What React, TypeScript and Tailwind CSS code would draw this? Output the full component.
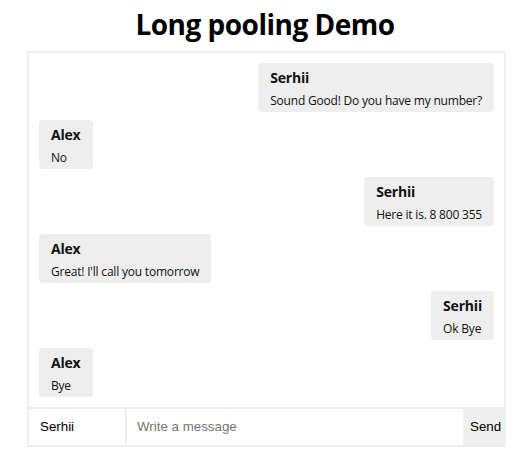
import React, { useState } from "react";

type Message = { id: number; author: string; text: string };

const ME = "Serhii";

const MESSAGES: Message[] = [
	{ id: 1, author: "Serhii", text: "Sound Good! Do you have my number?" },
	{ id: 2, author: "Alex", text: "No" },
	{ id: 3, author: "Serhii", text: "Here it is. 8 800 355" },
	{ id: 4, author: "Alex", text: "Great! I'll call you tomorrow" },
	{ id: 5, author: "Serhii", text: "Ok Bye" },
	{ id: 6, author: "Alex", text: "Bye" }
];

function Bubble({ msg }: { msg: Message }) {
	const mine = msg.author === ME;
	return (
		<div className={`flex ${mine ? "justify-end" : "justify-start"}`}>
			<div className="h-[49px] rounded-[4px] bg-[#eeeeee] px-3 pt-[6px]">
				<div className="text-[14px] font-bold leading-[18px] tracking-[-0.2px] text-[#111]">{msg.author}</div>
				<div className="mt-[5px] text-[12px] leading-[17px] tracking-[-0.2px] text-[#111]">{msg.text}</div>
			</div>
		</div>
	);
}

export default function App() {
	const [name, setName] = useState(ME);
	const [text, setText] = useState("");

	return (
		<div className="min-h-[462px] bg-white pt-[4px] font-['Open_Sans',sans-serif]">
			<h1 className="text-center text-[28px] font-bold leading-[40px] tracking-[-0.5px] text-black">Long pooling Demo</h1>

			<div className="ml-[27px] mt-[7px] w-[479px] border-2 border-[#eeeeee]">
				{/* messages */}
				<div className="flex flex-col gap-[8px] p-[10px]">
					{MESSAGES.map((m) => (
						<Bubble key={m.id} msg={m} />
					))}
				</div>

				{/* footer */}
				<form className="flex h-[38px] border-t-2 border-[#eeeeee] font-['Liberation_Sans',Arial,sans-serif] text-[13.33px]" onSubmit={(e) => e.preventDefault()}>
					<input
						value={name}
						onChange={(e) => setName(e.target.value)}
						className="w-[98px] border-r-2 border-[#eeeeee] bg-white pl-[11px] text-black outline-none"
					/>
					<input
						value={text}
						onChange={(e) => setText(e.target.value)}
						placeholder="Write a message"
						className="min-w-0 flex-1 bg-white pl-[10px] text-black outline-none placeholder:text-[#757575]"
					/>
					<button type="submit" className="w-[41px] bg-[#efefef] pl-[7px] text-left text-black">
						Send
					</button>
				</form>
			</div>
		</div>
	);
}
